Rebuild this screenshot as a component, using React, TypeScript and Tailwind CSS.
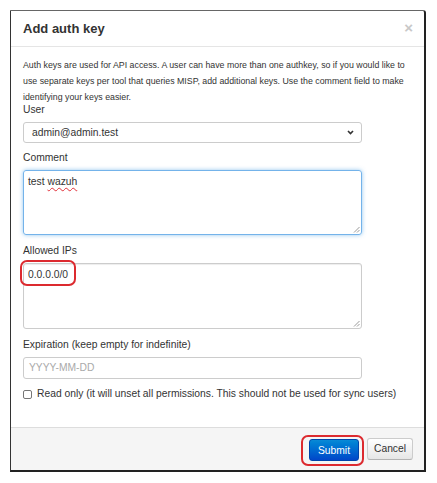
import React from "react";

// small resize grip drawn in the bottom-right corner of a textarea
const Grip = () => (
  <svg className="absolute right-[1px] bottom-[1px]" width="7" height="7" viewBox="0 0 7 7">
    <path d="M1 6.5 L6.5 1 M4 6.5 L6.5 4" stroke="#9a9a9a" strokeWidth="1" />
  </svg>
);

const App: React.FC = () => {
  return (
    <div className="w-[437px] h-[483px] bg-white pt-[10px] pl-[10px] font-['Liberation_Sans',Arial,sans-serif] text-[#333]">
      {/* Modal */}
      <div className="w-[416px] h-[462px] flex flex-col bg-white border-l border-t border-r-2 border-b-2 border-l-[#333] border-t-[#666] border-r-[#222] border-b-[#222] rounded-tr-[3px]">
        {/* Header */}
        <div className="h-[36px] shrink-0 flex items-center justify-between pl-[12px] pr-[11px] border-b border-[#e5e5e5]">
          <h3 className="text-[13px] font-bold leading-none">Add auth key</h3>
          <span className="text-[15px] font-bold leading-none text-[#c8c8c8] -mt-[3px]">×</span>
        </div>

        {/* Body */}
        <div className="flex-1 px-[12px] pt-[10px]">
          <p className="text-[8.8px] leading-[16px] w-[392px]">
            Auth keys are used for API access. A user can have more than one authkey, so if you would like to use
            separate keys per tool that queries MISP, add additional keys. Use the comment field to make identifying
            your keys easier.
          </p>

          <label className="block text-[10.3px] leading-[10px] mb-[7px]">User</label>
          <div className="w-[339px] h-[21px] flex items-center justify-between pl-[8px] pr-[7px] border border-[#ccc] rounded-[3px] text-[10.3px] mb-[10px]">
            <span>admin@admin.test</span>
            <svg width="7" height="5" viewBox="0 0 7 5">
              <path d="M1 1 L3.5 3.6 L6 1" fill="none" stroke="#333" strokeWidth="1.6" />
            </svg>
          </div>

          <label className="block text-[10.3px] leading-[10px] mb-[7px]">Comment</label>
          <div className="relative w-[339px] h-[65px] border border-[#74b3ea] rounded-[3px] shadow-[0_0_4px_rgba(102,175,233,0.7)] pl-[4px] pt-[4px] text-[10.3px] leading-[13px] mb-[11px]">
            test <span className="underline decoration-wavy decoration-[#e0303a] decoration-1 underline-offset-2">wazuh</span>
            <Grip />
          </div>

          <label className="block text-[10.3px] leading-[10px] mb-[7px]">Allowed IPs</label>
          <div className="relative w-[339px] h-[66px] border border-[#ccc] rounded-[3px] shadow-[inset_0_1px_1px_rgba(0,0,0,0.075)] pl-[4px] pt-[4px] text-[10.3px] leading-[13px] mb-[11px]">
            0.0.0.0/0
            <Grip />
            {/* red annotation ring */}
            <div className="absolute -left-[4px] -top-[4px] w-[56px] h-[26px] border-2 border-[#dc2a2f] rounded-[7px]" />
          </div>

          <label className="block text-[10.3px] leading-[10px] mb-[7px]">Expiration (keep empty for indefinite)</label>
          <div className="w-[339px] h-[22px] flex items-center border border-[#ccc] rounded-[3px] pl-[5px] text-[10.3px] text-[#aaa] mb-[9px]">
            YYYY-MM-DD
          </div>

          <div className="flex items-center gap-[5px] h-[12px]">
            <span className="w-[9px] h-[9px] border border-[#767676] rounded-[2px] bg-white" />
            <span className="text-[10.3px] leading-none">
              Read only (it will unset all permissions. This should not be used for sync users)
            </span>
          </div>
        </div>

        {/* Footer */}
        <div className="h-[43px] shrink-0 flex items-center justify-end gap-[8px] pr-[11px] bg-[#f5f5f5] border-t border-[#ddd]">
          <div className="relative">
            <button className="w-[50px] h-[22px] rounded-[3px] border border-[#0044aa] bg-gradient-to-b from-[#0a8ad6] to-[#0346c9] text-white text-[10.3px]">
              Submit
            </button>
            <div className="absolute -left-[8px] -top-[2px] w-[63px] h-[31px] border-2 border-[#dc2a2f] rounded-[7px]" />
          </div>
          <button className="w-[46px] h-[22px] rounded-[3px] border border-[#ccc] border-b-[#b3b3b3] bg-gradient-to-b from-white to-[#e6e6e6] text-[#333] text-[10.3px]">
            Cancel
          </button>
        </div>
      </div>
    </div>
  );
};

export default App;
